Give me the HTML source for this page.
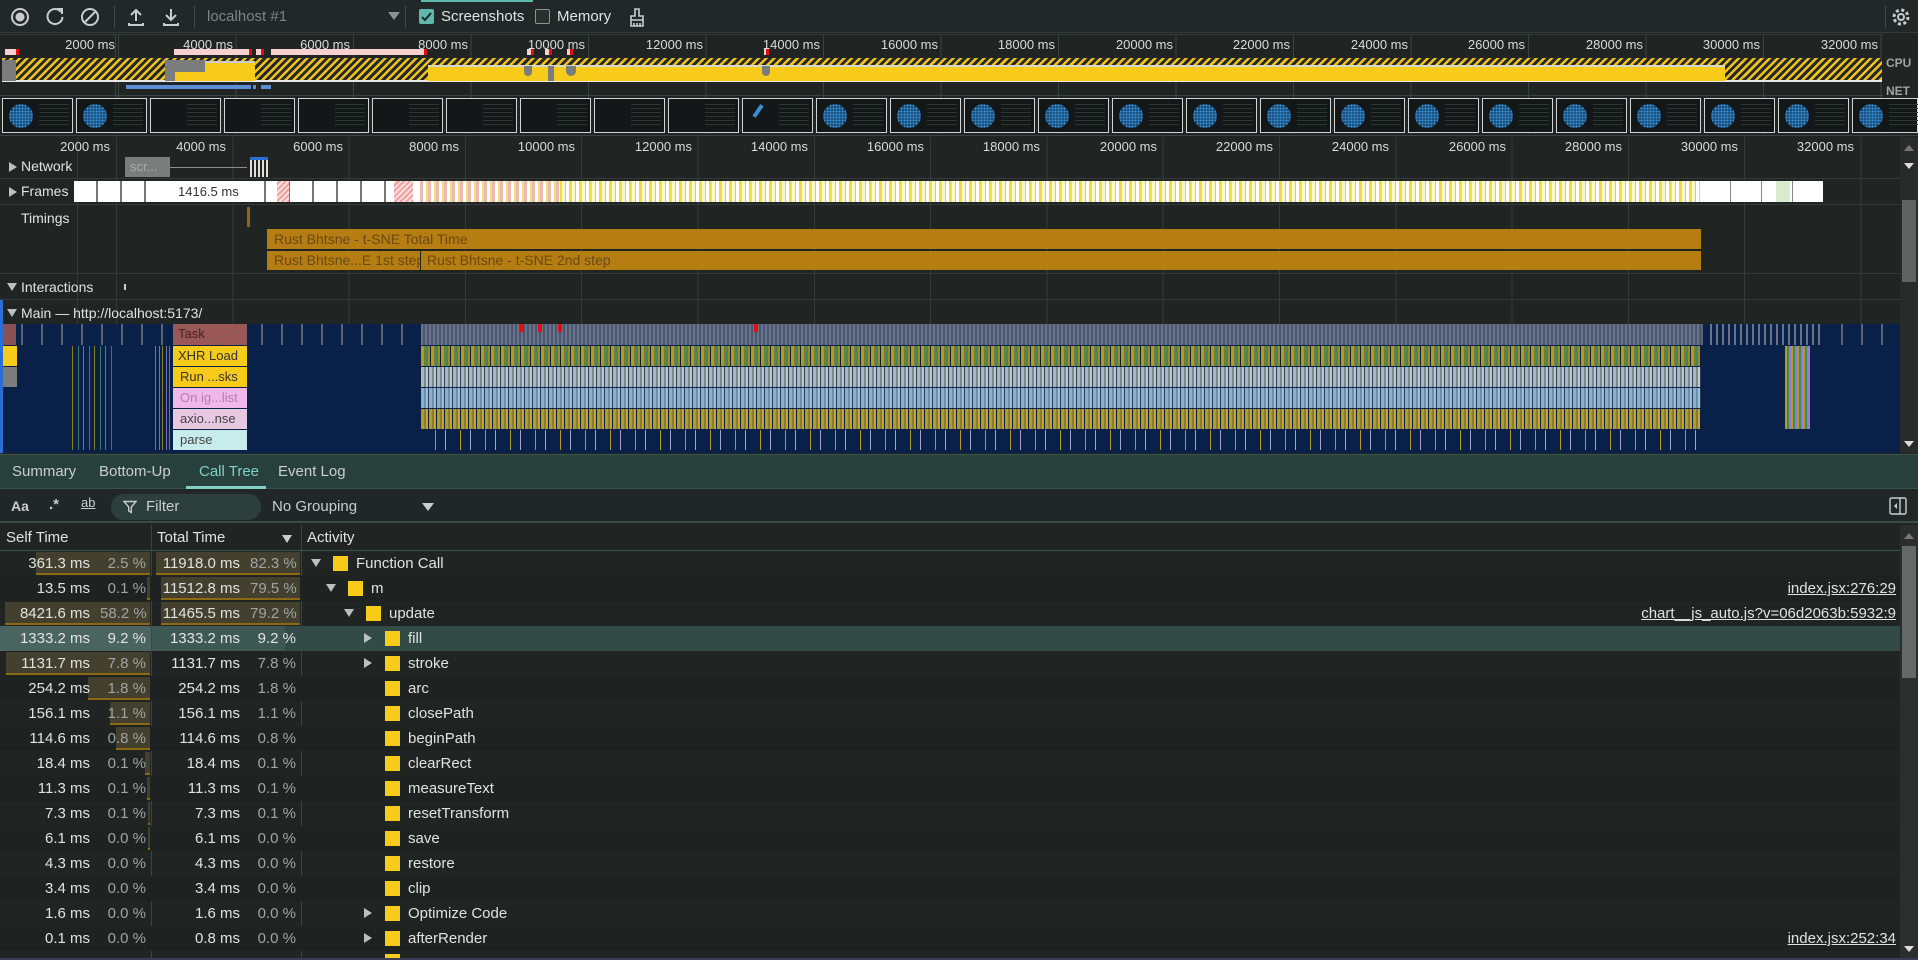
<!DOCTYPE html>
<html><head><meta charset="utf-8"><style>
*{margin:0;padding:0;box-sizing:border-box}
body{width:1918px;height:960px;overflow:hidden;background:#202524;font-family:"Liberation Sans",sans-serif;color:#e1e3e1;position:relative}
.a{position:absolute}
.lbl{position:absolute;font-size:13px;color:#d8dcdb;white-space:nowrap;text-align:right;width:80px}
.ico{position:absolute;top:6px;width:22px;height:22px}
.thumb{position:absolute;top:98px;width:71px;height:35px;border:1px solid #cfd3d2;background:#141717}
.thumb::after{content:"";position:absolute;left:36px;top:5px;width:30px;height:24px;background:repeating-linear-gradient(180deg,#2e3a30 0 1px,transparent 1px 4px);opacity:.9}
.blob{position:absolute;left:6px;top:5px;width:24px;height:24px;border-radius:50%;background:radial-gradient(circle,#3a95d8 0 1px,transparent 1.3px) 0 0/3px 3px,radial-gradient(circle,#1a4e80 0,#123a60 70%,transparent 72%)}
.row{position:absolute;left:0;width:1900px;height:25px;font-size:15px}
.c{position:absolute;top:4px;white-space:nowrap}
.ms{text-align:right;width:90px}
.pc{text-align:right;color:#9ea5a3}
.sq{position:absolute;top:5px;width:15px;height:15px;background:#f8cb1a}
.tri{position:absolute;top:8px;width:0;height:0;border-left:5px solid transparent;border-right:5px solid transparent;border-top:8px solid #b9c0be}
.trr{position:absolute;top:7px;width:0;height:0;border-top:5px solid transparent;border-bottom:5px solid transparent;border-left:8px solid #b9c0be}
.bar{position:absolute;top:1px;height:23px;background:#43402f;border-bottom:2px solid #8c6a12}
.lk{position:absolute;top:4px;right:4px;text-decoration:underline;color:#dfe4e3;font-size:15px}
.tab{position:absolute;top:463px;font-size:15px;color:#c9cecd}
</style></head><body>
<!-- toolbar -->
<div class="a" style="left:0;top:0;width:1918px;height:33px;background:#222827;border-bottom:1px solid #333b3a"></div>
<div class="a" style="left:421px;top:0;width:112px;height:2px;background:#5fb8ad"></div>
<svg class="ico" style="left:9px" viewBox="0 0 22 22"><circle cx="11" cy="11" r="8" fill="none" stroke="#c8cdcc" stroke-width="2"/><circle cx="11" cy="11" r="4.5" fill="#c8cdcc"/></svg>
<svg class="ico" style="left:44px" viewBox="0 0 22 22"><path d="M17 6 A7.5 7.5 0 1 0 18.5 11" fill="none" stroke="#c8cdcc" stroke-width="2"/><path d="M13 3 L18 3 L18 8" fill="none" stroke="#c8cdcc" stroke-width="2"/></svg>
<svg class="ico" style="left:79px" viewBox="0 0 22 22"><circle cx="11" cy="11" r="8" fill="none" stroke="#c8cdcc" stroke-width="2"/><path d="M6 16 L16 6" stroke="#c8cdcc" stroke-width="2"/></svg>
<div class="a" style="left:114px;top:6px;width:1px;height:22px;background:#444c4a"></div>
<svg class="ico" style="left:125px" viewBox="0 0 22 22"><path d="M11 15 V4 M6 9 L11 4 L16 9 M4 17 V19 H18 V17" fill="none" stroke="#c8cdcc" stroke-width="2"/></svg>
<svg class="ico" style="left:160px" viewBox="0 0 22 22"><path d="M11 3 V14 M6 9 L11 14 L16 9 M4 17 V19 H18 V17" fill="none" stroke="#c8cdcc" stroke-width="2"/></svg>
<div class="a" style="left:194px;top:6px;width:1px;height:22px;background:#444c4a"></div>
<div class="a" style="left:207px;top:8px;font-size:15px;color:#7d8583">localhost #1</div>
<div class="a" style="left:388px;top:12px;border-left:6px solid transparent;border-right:6px solid transparent;border-top:8px solid #8a9290"></div>
<div class="a" style="left:405px;top:6px;width:1px;height:22px;background:#444c4a"></div>
<div class="a" style="left:419px;top:9px;width:15px;height:15px;background:#5fb8ad;border-radius:2px"></div>
<svg class="a" style="left:420px;top:10px" width="13" height="13" viewBox="0 0 13 13"><path d="M2 7 L5 10 L11 3" fill="none" stroke="#1d2a28" stroke-width="2"/></svg>
<div class="a" style="left:441px;top:8px;font-size:15px;color:#dfe3e2">Screenshots</div>
<div class="a" style="left:535px;top:9px;width:15px;height:15px;border:1.5px solid #8d9593;border-radius:2px;background:#2a2f2e"></div>
<div class="a" style="left:557px;top:8px;font-size:15px;color:#dfe3e2">Memory</div>
<svg class="ico" style="left:626px" viewBox="0 0 22 22"><path d="M9 3 H13 V10 H17 V14 H5 V10 H9 Z M5 14 V20 H17 V14 M8 17 V20 M11 17 V20 M14 17 V20" fill="none" stroke="#c8cdcc" stroke-width="1.6"/></svg>
<div class="a" style="left:1885px;top:6px;width:1px;height:22px;background:#444c4a"></div>
<svg class="ico" style="left:1890px" viewBox="0 0 22 22"><circle cx="11" cy="11" r="3" fill="none" stroke="#c8cdcc" stroke-width="2"/><circle cx="11" cy="11" r="7" fill="none" stroke="#c8cdcc" stroke-width="3" stroke-dasharray="3 2.5"/></svg>

<!-- overview -->
<div class="a" style="left:0;top:34px;width:1883px;height:100px;background:repeating-linear-gradient(90deg,#3a4442 0 1px,transparent 1px 117.5px);background-position:118px 0"></div>
<div class="a" style="left:0;top:34px;width:1883px;height:1px;background:#333b3a"></div>
<div class="lbl" style="left:35px;top:37px">2000 ms</div><div class="lbl" style="left:153px;top:37px">4000 ms</div><div class="lbl" style="left:270px;top:37px">6000 ms</div><div class="lbl" style="left:388px;top:37px">8000 ms</div><div class="lbl" style="left:505px;top:37px">10000 ms</div><div class="lbl" style="left:623px;top:37px">12000 ms</div><div class="lbl" style="left:740px;top:37px">14000 ms</div><div class="lbl" style="left:858px;top:37px">16000 ms</div><div class="lbl" style="left:975px;top:37px">18000 ms</div><div class="lbl" style="left:1093px;top:37px">20000 ms</div><div class="lbl" style="left:1210px;top:37px">22000 ms</div><div class="lbl" style="left:1328px;top:37px">24000 ms</div><div class="lbl" style="left:1445px;top:37px">26000 ms</div><div class="lbl" style="left:1563px;top:37px">28000 ms</div><div class="lbl" style="left:1680px;top:37px">30000 ms</div><div class="lbl" style="left:1798px;top:37px">32000 ms</div>
<!-- red bars -->
<div class="a" style="left:5px;top:49px;width:14px;height:6px;background:#f8d0d0;border-right:3px solid #e01010"></div>
<div class="a" style="left:174px;top:49px;width:78px;height:6px;background:#f8d0d0;border-right:3px solid #e01010"></div>
<div class="a" style="left:256px;top:49px;width:8px;height:6px;background:#f8d0d0;border-right:3px solid #e01010"></div>
<div class="a" style="left:271px;top:49px;width:156px;height:6px;background:#f8d0d0;border-right:3px solid #e01010"></div>
<div class="a" style="left:527px;top:49px;width:7px;height:6px;background:#f8d0d0;border-right:3px solid #e01010"></div>
<div class="a" style="left:545px;top:49px;width:7px;height:6px;background:#f8d0d0;border-right:3px solid #e01010"></div>
<div class="a" style="left:567px;top:49px;width:6px;height:6px;background:#f8d0d0;border-right:3px solid #e01010"></div>
<div class="a" style="left:764px;top:49px;width:5px;height:6px;background:#f8d0d0;border-right:3px solid #e01010"></div>
<!-- CPU -->
<div class="a" style="left:2px;top:58px;width:1880px;height:24px;background:repeating-linear-gradient(-45deg,#f0c31a 0 2.5px,#262a22 2.5px 5.5px);border-bottom:2px solid #e8e8e8"></div>
<div class="a" style="left:2px;top:60px;width:14px;height:21px;background:#7a7d7c"></div>
<div class="a" style="left:165px;top:60px;width:40px;height:21px;background:#7a7d7c"></div>
<div class="a" style="left:175px;top:72px;width:30px;height:9px;background:#f8cb1a"></div>
<div class="a" style="left:205px;top:61px;width:50px;height:20px;background:#f8cb1a;border-top:2px solid #ccc"></div>
<div class="a" style="left:428px;top:65px;width:1297px;height:16px;background:#f8cb1a;border-top:2px solid #d8d8c8"></div>
<div class="a" style="left:524px;top:66px;width:8px;height:10px;background:#7a7d7c;border-radius:0 0 4px 4px"></div>
<div class="a" style="left:548px;top:66px;width:6px;height:15px;background:#7a7d7c"></div>
<div class="a" style="left:566px;top:66px;width:10px;height:10px;background:#7a7d7c;border-radius:0 0 5px 5px"></div>
<div class="a" style="left:762px;top:66px;width:8px;height:10px;background:#7a7d7c;border-radius:0 0 4px 4px"></div>
<div class="a" style="left:1886px;top:56px;font-size:12px;font-weight:bold;color:#9ea5a3">CPU</div>
<div class="a" style="left:1886px;top:84px;font-size:12px;font-weight:bold;color:#9ea5a3">NET</div>
<div class="a" style="left:126px;top:85px;width:125px;height:4px;background:#5b8ed6"></div>
<div class="a" style="left:253px;top:85px;width:3px;height:4px;background:#5b8ed6"></div>
<div class="a" style="left:261px;top:85px;width:10px;height:4px;background:#5b8ed6"></div>
<div class="a" style="left:0;top:95px;width:1883px;height:1px;background:#3a4442"></div>
<!-- thumbnails -->
<div class="thumb" style="left:2px"><div class="blob"></div></div>
<div class="thumb" style="left:76px"><div class="blob"></div></div>
<div class="thumb" style="left:150px"></div><div class="thumb" style="left:224px"></div><div class="thumb" style="left:298px"></div><div class="thumb" style="left:372px"></div><div class="thumb" style="left:446px"></div><div class="thumb" style="left:520px"></div><div class="thumb" style="left:594px"></div><div class="thumb" style="left:668px"></div>
<div class="thumb" style="left:742px"><div class="a" style="left:8px;top:10px;width:14px;height:4px;background:#3a8fd4;transform:rotate(-55deg)"></div></div>
<div class="thumb" style="left:816px"><div class="blob"></div></div>
<div class="thumb" style="left:890px"><div class="blob"></div></div>
<div class="thumb" style="left:964px"><div class="blob"></div></div>
<div class="thumb" style="left:1038px"><div class="blob"></div></div>
<div class="thumb" style="left:1112px"><div class="blob"></div></div>
<div class="thumb" style="left:1186px"><div class="blob"></div></div>
<div class="thumb" style="left:1260px"><div class="blob"></div></div>
<div class="thumb" style="left:1334px"><div class="blob"></div></div>
<div class="thumb" style="left:1408px"><div class="blob"></div></div>
<div class="thumb" style="left:1482px"><div class="blob"></div></div>
<div class="thumb" style="left:1556px"><div class="blob"></div></div>
<div class="thumb" style="left:1630px"><div class="blob"></div></div>
<div class="thumb" style="left:1704px"><div class="blob"></div></div>
<div class="thumb" style="left:1778px"><div class="blob"></div></div>
<div class="thumb" style="left:1852px;width:66px"><div class="blob"></div></div>
<div class="a" style="left:0;top:135px;width:1918px;height:1px;background:#3a4442"></div>

<!-- main timeline -->
<div class="a" style="left:0;top:137px;width:1900px;height:316px;background:repeating-linear-gradient(90deg,#333c3a 0 1px,transparent 1px 116.3px);background-position:116px 0"></div>
<div class="lbl" style="left:30px;top:139px">2000 ms</div><div class="lbl" style="left:146px;top:139px">4000 ms</div><div class="lbl" style="left:263px;top:139px">6000 ms</div><div class="lbl" style="left:379px;top:139px">8000 ms</div><div class="lbl" style="left:495px;top:139px">10000 ms</div><div class="lbl" style="left:612px;top:139px">12000 ms</div><div class="lbl" style="left:728px;top:139px">14000 ms</div><div class="lbl" style="left:844px;top:139px">16000 ms</div><div class="lbl" style="left:960px;top:139px">18000 ms</div><div class="lbl" style="left:1077px;top:139px">20000 ms</div><div class="lbl" style="left:1193px;top:139px">22000 ms</div><div class="lbl" style="left:1309px;top:139px">24000 ms</div><div class="lbl" style="left:1426px;top:139px">26000 ms</div><div class="lbl" style="left:1542px;top:139px">28000 ms</div><div class="lbl" style="left:1658px;top:139px">30000 ms</div><div class="lbl" style="left:1774px;top:139px">32000 ms</div>
<div class="trr" style="left:9px;top:162px"></div><div class="a" style="left:21px;top:158px;font-size:14px">Network</div>
<div class="a" style="left:125px;top:157px;width:45px;height:20px;background:#7a7d7c;font-size:13px;color:#aaa;padding:2px 0 0 5px">scr...</div>
<div class="a" style="left:170px;top:167px;width:77px;height:1px;background:#8a8d8c"></div>
<div class="a" style="left:250px;top:157px;width:18px;height:20px;background:repeating-linear-gradient(90deg,#e0e0d8 0 2px,#222 2px 4px)"></div>
<div class="a" style="left:250px;top:157px;width:18px;height:3px;background:#2a6fd6"></div>
<div class="a" style="left:0;top:178px;width:1900px;height:1px;background:#333b3a"></div>
<div class="trr" style="left:9px;top:187px"></div><div class="a" style="left:21px;top:183px;font-size:14px">Frames</div>
<div class="a" style="left:74px;top:181px;width:346px;height:21px;background:repeating-linear-gradient(90deg,#fff 0 22px,#777 22px 24px)"></div>
<div class="a" style="left:166px;top:181px;width:83px;height:21px;background:#fff;color:#333;font-size:13px;padding:3px 0 0 12px">1416.5 ms</div>
<div class="a" style="left:277px;top:181px;width:12px;height:21px;background:repeating-linear-gradient(-45deg,#f2a0a0 0 2px,#fbe0e0 2px 4px)"></div>
<div class="a" style="left:394px;top:181px;width:19px;height:21px;background:repeating-linear-gradient(-45deg,#f2a0a0 0 2px,#fbe0e0 2px 4px)"></div>
<div class="a" style="left:420px;top:181px;width:140px;height:21px;background:repeating-linear-gradient(90deg,#f2b8b8 0 3px,#fff 3px 6px,#eee070 6px 8px)"></div>
<div class="a" style="left:560px;top:181px;width:1140px;height:21px;background:repeating-linear-gradient(90deg,#f0e040 0 2px,#fbf8d0 2px 5px,#e8d020 5px 6px,#fff 6px 9px,#d8d880 9px 10px)"></div>
<div class="a" style="left:1700px;top:181px;width:123px;height:21px;background:repeating-linear-gradient(90deg,#fff 0 30px,#888 30px 31px)"></div>
<div class="a" style="left:1776px;top:181px;width:14px;height:21px;background:#d8ecd0"></div>
<div class="a" style="left:0;top:204px;width:1900px;height:1px;background:#333b3a"></div>
<div class="a" style="left:21px;top:210px;font-size:14px">Timings</div>
<div class="a" style="left:247px;top:207px;width:3px;height:20px;background:#8a6a12"></div>
<div class="a" style="left:267px;top:229px;width:1434px;height:20px;background:#b57d12;color:#6b4a0d;font-size:14px;padding:2px 0 0 7px;white-space:nowrap">Rust Bhtsne - t-SNE Total Time</div>
<div class="a" style="left:267px;top:251px;width:153px;height:19px;background:#b57d12;color:#6b4a0d;font-size:14px;padding:1px 0 0 7px;white-space:nowrap;overflow:hidden">Rust Bhtsne...E 1st step</div>
<div class="a" style="left:421px;top:251px;width:1280px;height:19px;background:#b57d12;color:#6b4a0d;font-size:14px;padding:1px 0 0 6px;white-space:nowrap">Rust Bhtsne - t-SNE 2nd step</div>
<div class="a" style="left:0;top:273px;width:1900px;height:1px;background:#333b3a"></div>
<div class="tri" style="left:7px;top:283px"></div><div class="a" style="left:21px;top:279px;font-size:14px">Interactions</div>
<div class="a" style="left:124px;top:284px;width:2px;height:6px;background:#ccc"></div>
<div class="a" style="left:0;top:299px;width:1900px;height:1px;background:#333b3a"></div>
<div class="a" style="left:0;top:300px;width:3px;height:153px;background:#2a6fd6"></div>
<div class="tri" style="left:7px;top:309px"></div><div class="a" style="left:21px;top:305px;font-size:14px">Main — http://localhost:5173/</div>

<!-- flame chart -->
<div class="a" style="left:3px;top:324px;width:1897px;height:129px;background:#092149"></div>
<div class="a" style="left:3px;top:324px;width:1897px;height:21px;background:repeating-linear-gradient(90deg,transparent 0 18px,#5a6270 18px 20px)"></div>
<div class="a" style="left:3px;top:324px;width:13px;height:21px;background:repeating-linear-gradient(-45deg,#9a4a4a 0 2px,#7a5a5a 2px 4px)"></div>
<div class="a" style="left:173px;top:324px;width:74px;height:21px;background:repeating-linear-gradient(-45deg,#a85050 0 2px,#8a6060 2px 4px);font-size:13px;color:#4a2020;padding:2px 0 0 5px">Task</div>
<div class="a" style="left:3px;top:346px;width:14px;height:20px;background:#f8cb1a"></div>
<div class="a" style="left:3px;top:367px;width:14px;height:20px;background:#7a7d7c"></div>
<div class="a" style="left:72px;top:346px;width:40px;height:104px;background:repeating-linear-gradient(90deg,#8a7a20 0 1px,#092149 1px 6px,#3a7a60 6px 7px,#092149 7px 11px)"></div>
<div class="a" style="left:155px;top:346px;width:18px;height:104px;background:repeating-linear-gradient(90deg,#8a7a20 0 1px,#092149 1px 4px,#7a6ab0 4px 5px,#092149 5px 7px)"></div>
<div class="a" style="left:173px;top:346px;width:74px;height:20px;background:#f8cb1a;color:#333;font-size:13px;padding:2px 0 0 5px">XHR Load</div>
<div class="a" style="left:173px;top:367px;width:74px;height:20px;background:#f8cb1a;color:#333;font-size:13px;padding:2px 0 0 7px">Run ...sks</div>
<div class="a" style="left:173px;top:388px;width:74px;height:20px;background:#f0b8e8;color:#b080b0;font-size:13px;padding:2px 0 0 7px">On ig...list</div>
<div class="a" style="left:173px;top:409px;width:74px;height:20px;background:#e8c8e0;color:#444;font-size:13px;padding:2px 0 0 7px">axio...nse</div>
<div class="a" style="left:173px;top:430px;width:74px;height:20px;background:#c8ecec;color:#444;font-size:13px;padding:2px 0 0 7px">parse</div>
<!-- dense -->
<div class="a" style="left:421px;top:324px;width:1280px;height:21px;background:repeating-linear-gradient(90deg,#6a7488 0 2px,#4c5670 2px 4px)"></div>
<div class="a" style="left:421px;top:346px;width:1280px;height:20px;background:repeating-linear-gradient(90deg,#b49a20 0 3px,#7a7a30 3px 5px,#3a8a6a 5px 7px,#a08a20 7px 9px,#092149 9px 10px)"></div>
<div class="a" style="left:421px;top:367px;width:1280px;height:20px;background:repeating-linear-gradient(90deg,#a8b8b8 0 3px,#7a8a8a 3px 5px,#c0cccc 5px 7px,#2a3a5a 7px 8px)"></div>
<div class="a" style="left:421px;top:388px;width:1280px;height:20px;background:repeating-linear-gradient(90deg,#8ab0d0 0 3px,#6a90b0 3px 5px,#a0c0d8 5px 7px,#2a3a5a 7px 8px)"></div>
<div class="a" style="left:421px;top:409px;width:1280px;height:20px;background:repeating-linear-gradient(90deg,#b49a20 0 3px,#8a7a3a 3px 5px,#c0a830 5px 7px,#092149 7px 8px)"></div>
<div class="a" style="left:421px;top:430px;width:1280px;height:20px;background:repeating-linear-gradient(90deg,#092149 0 14px,#b49a20 14px 15px,#092149 15px 24px,#a8a0d0 24px 25px)"></div>
<div class="a" style="left:1710px;top:324px;width:113px;height:21px;background:repeating-linear-gradient(90deg,#6a7488 0 2px,#092149 2px 6px)"></div>
<div class="a" style="left:1785px;top:346px;width:25px;height:83px;background:repeating-linear-gradient(90deg,#b49a20 0 2px,#3a8a6a 2px 4px,#9a7ad0 4px 6px)"></div>
<div class="a" style="left:519px;top:324px;width:5px;height:8px;background:#e01010"></div>
<div class="a" style="left:538px;top:324px;width:4px;height:8px;background:#e01010"></div>
<div class="a" style="left:558px;top:324px;width:4px;height:8px;background:#e01010"></div>
<div class="a" style="left:754px;top:324px;width:4px;height:8px;background:#e01010"></div>
<!-- timeline scrollbar -->
<div class="a" style="left:1900px;top:137px;width:18px;height:316px;background:#272c2b"></div>
<div class="a" style="left:1904px;top:145px;border-left:5px solid transparent;border-right:5px solid transparent;border-bottom:6px solid #777"></div>
<div class="a" style="left:1904px;top:163px;border-left:5px solid transparent;border-right:5px solid transparent;border-top:6px solid #ddd"></div>
<div class="a" style="left:1902px;top:200px;width:14px;height:82px;background:#5f6362"></div>
<div class="a" style="left:1904px;top:441px;border-left:5px solid transparent;border-right:5px solid transparent;border-top:6px solid #ddd"></div>

<!-- tabs -->
<div class="a" style="left:0;top:454px;width:1918px;height:35px;background:#28403c;border-top:1px solid #3a5450;border-bottom:1px solid #3a5450"></div>
<div class="tab" style="left:12px">Summary</div>
<div class="tab" style="left:99px">Bottom-Up</div>
<div class="tab" style="left:199px;color:#7fd1c6">Call Tree</div>
<div class="a" style="left:186px;top:486px;width:80px;height:3px;background:#7fd1c6"></div>
<div class="tab" style="left:278px">Event Log</div>
<!-- filter bar -->
<div class="a" style="left:0;top:490px;width:1918px;height:33px;background:#212726;border-bottom:2px solid #3a4c49"></div>
<div class="a" style="left:11px;top:498px;font-size:14px;font-weight:bold;color:#c9cecd">Aa</div>
<div class="a" style="left:49px;top:496px;font-size:15px;font-weight:bold;color:#c9cecd">.*</div>
<div class="a" style="left:81px;top:495px;font-size:13px;color:#c9cecd;text-decoration:underline">ab</div>
<div class="a" style="left:111px;top:494px;width:150px;height:26px;border-radius:13px;background:#2c3f3c"></div>
<svg class="a" style="left:123px;top:500px" width="14" height="14" viewBox="0 0 14 14"><path d="M1 1.5 H13 L8.3 7 V12.5 L5.7 11 V7 Z" fill="none" stroke="#c9cecd" stroke-width="1.4"/></svg>
<div class="a" style="left:146px;top:498px;font-size:15px;color:#c9cecd">Filter</div>
<div class="a" style="left:272px;top:498px;font-size:15px;color:#c9cecd">No Grouping</div>
<div class="a" style="left:422px;top:503px;border-left:6px solid transparent;border-right:6px solid transparent;border-top:8px solid #c9cecd"></div>
<svg class="a" style="left:1889px;top:497px" width="18" height="18" viewBox="0 0 18 18"><rect x="1" y="1" width="16" height="16" rx="1.5" fill="none" stroke="#c9cecd" stroke-width="1.4"/><path d="M11 1 V17" stroke="#c9cecd" stroke-width="1.4"/><path d="M8 6 L5 9 L8 12 Z" fill="#c9cecd"/></svg>
<!-- header -->
<div class="a" style="left:0;top:525px;width:1900px;height:26px;border-bottom:1px solid #3a5450"></div>
<div class="a" style="left:6px;top:529px;font-size:15px">Self Time</div>
<div class="a" style="left:157px;top:529px;font-size:15px">Total Time</div>
<div class="a" style="left:282px;top:535px;border-left:5px solid transparent;border-right:5px solid transparent;border-top:8px solid #c9cecd"></div>
<div class="a" style="left:307px;top:529px;font-size:15px">Activity</div>
<div class="a" style="left:151px;top:525px;width:1px;height:435px;background:#3a4442"></div>
<div class="a" style="left:301px;top:525px;width:1px;height:435px;background:#3a4442"></div>

<!-- rows -->
<div class="row" style="top:551px">
<div class="bar" style="left:36px;width:114px"></div><div class="bar" style="left:156px;width:144px"></div>
<div class="c ms" style="left:0">361.3 ms</div><div class="c pc" style="left:100px;width:46px">2.5 %</div>
<div class="c ms" style="left:150px">11918.0 ms</div><div class="c pc" style="left:250px;width:46px">82.3 %</div>
<div class="tri" style="left:311px"></div><div class="sq" style="left:333px"></div><div class="c" style="left:356px">Function Call</div></div>
<div class="row" style="top:576px;background:#1e2322">
<div class="bar" style="left:147px;width:3px"></div><div class="bar" style="left:161px;width:139px"></div>
<div class="c ms" style="left:0">13.5 ms</div><div class="c pc" style="left:100px;width:46px">0.1 %</div>
<div class="c ms" style="left:150px">11512.8 ms</div><div class="c pc" style="left:250px;width:46px">79.5 %</div>
<div class="tri" style="left:326px"></div><div class="sq" style="left:348px"></div><div class="c" style="left:371px">m</div>
<div class="lk">index.jsx:276:29</div></div>
<div class="row" style="top:601px">
<div class="bar" style="left:5px;width:145px"></div><div class="bar" style="left:161px;width:139px"></div>
<div class="c ms" style="left:0">8421.6 ms</div><div class="c pc" style="left:100px;width:46px">58.2 %</div>
<div class="c ms" style="left:150px">11465.5 ms</div><div class="c pc" style="left:250px;width:46px">79.2 %</div>
<div class="tri" style="left:344px"></div><div class="sq" style="left:366px"></div><div class="c" style="left:389px">update</div>
<div class="lk">chart__js_auto.js?v=06d2063b:5932:9</div></div>
<div class="row" style="top:626px;background:#324b47">
<div class="a" style="left:0;top:0;width:151px;height:25px;background:#4a6460"></div><div class="a" style="left:152px;top:0;width:133px;height:25px;background:#3e5854"></div>
<div class="c ms" style="left:0">1333.2 ms</div><div class="c pc" style="left:100px;width:46px;color:#e1e3e1">9.2 %</div>
<div class="c ms" style="left:150px">1333.2 ms</div><div class="c pc" style="left:250px;width:46px;color:#e1e3e1">9.2 %</div>
<div class="trr" style="left:364px"></div><div class="sq" style="left:385px"></div><div class="c" style="left:408px">fill</div></div>
<div class="row" style="top:651px">
<div class="bar" style="left:6px;width:144px"></div>
<div class="c ms" style="left:0">1131.7 ms</div><div class="c pc" style="left:100px;width:46px">7.8 %</div>
<div class="c ms" style="left:150px">1131.7 ms</div><div class="c pc" style="left:250px;width:46px">7.8 %</div>
<div class="trr" style="left:364px"></div><div class="sq" style="left:385px"></div><div class="c" style="left:408px">stroke</div></div>
<div class="row" style="top:676px;background:#1e2322">
<div class="bar" style="left:88px;width:62px"></div>
<div class="c ms" style="left:0">254.2 ms</div><div class="c pc" style="left:100px;width:46px">1.8 %</div>
<div class="c ms" style="left:150px">254.2 ms</div><div class="c pc" style="left:250px;width:46px">1.8 %</div>
<div class="sq" style="left:385px"></div><div class="c" style="left:408px">arc</div></div>
<div class="row" style="top:701px">
<div class="bar" style="left:110px;width:40px"></div>
<div class="c ms" style="left:0">156.1 ms</div><div class="c pc" style="left:100px;width:46px">1.1 %</div>
<div class="c ms" style="left:150px">156.1 ms</div><div class="c pc" style="left:250px;width:46px">1.1 %</div>
<div class="sq" style="left:385px"></div><div class="c" style="left:408px">closePath</div></div>
<div class="row" style="top:726px;background:#1e2322">
<div class="bar" style="left:116px;width:34px"></div>
<div class="c ms" style="left:0">114.6 ms</div><div class="c pc" style="left:100px;width:46px">0.8 %</div>
<div class="c ms" style="left:150px">114.6 ms</div><div class="c pc" style="left:250px;width:46px">0.8 %</div>
<div class="sq" style="left:385px"></div><div class="c" style="left:408px">beginPath</div></div>
<div class="row" style="top:751px">
<div class="bar" style="left:145px;width:5px"></div>
<div class="c ms" style="left:0">18.4 ms</div><div class="c pc" style="left:100px;width:46px">0.1 %</div>
<div class="c ms" style="left:150px">18.4 ms</div><div class="c pc" style="left:250px;width:46px">0.1 %</div>
<div class="sq" style="left:385px"></div><div class="c" style="left:408px">clearRect</div></div>
<div class="row" style="top:776px;background:#1e2322">
<div class="bar" style="left:147px;width:3px"></div>
<div class="c ms" style="left:0">11.3 ms</div><div class="c pc" style="left:100px;width:46px">0.1 %</div>
<div class="c ms" style="left:150px">11.3 ms</div><div class="c pc" style="left:250px;width:46px">0.1 %</div>
<div class="sq" style="left:385px"></div><div class="c" style="left:408px">measureText</div></div>
<div class="row" style="top:801px">
<div class="bar" style="left:148px;width:2px"></div>
<div class="c ms" style="left:0">7.3 ms</div><div class="c pc" style="left:100px;width:46px">0.1 %</div>
<div class="c ms" style="left:150px">7.3 ms</div><div class="c pc" style="left:250px;width:46px">0.1 %</div>
<div class="sq" style="left:385px"></div><div class="c" style="left:408px">resetTransform</div></div>
<div class="row" style="top:826px;background:#1e2322">
<div class="bar" style="left:148px;width:2px"></div>
<div class="c ms" style="left:0">6.1 ms</div><div class="c pc" style="left:100px;width:46px">0.0 %</div>
<div class="c ms" style="left:150px">6.1 ms</div><div class="c pc" style="left:250px;width:46px">0.0 %</div>
<div class="sq" style="left:385px"></div><div class="c" style="left:408px">save</div></div>
<div class="row" style="top:851px">
<div class="c ms" style="left:0">4.3 ms</div><div class="c pc" style="left:100px;width:46px">0.0 %</div>
<div class="c ms" style="left:150px">4.3 ms</div><div class="c pc" style="left:250px;width:46px">0.0 %</div>
<div class="sq" style="left:385px"></div><div class="c" style="left:408px">restore</div></div>
<div class="row" style="top:876px;background:#1e2322">
<div class="c ms" style="left:0">3.4 ms</div><div class="c pc" style="left:100px;width:46px">0.0 %</div>
<div class="c ms" style="left:150px">3.4 ms</div><div class="c pc" style="left:250px;width:46px">0.0 %</div>
<div class="sq" style="left:385px"></div><div class="c" style="left:408px">clip</div></div>
<div class="row" style="top:901px">
<div class="c ms" style="left:0">1.6 ms</div><div class="c pc" style="left:100px;width:46px">0.0 %</div>
<div class="c ms" style="left:150px">1.6 ms</div><div class="c pc" style="left:250px;width:46px">0.0 %</div>
<div class="trr" style="left:364px"></div><div class="sq" style="left:385px"></div><div class="c" style="left:408px">Optimize Code</div></div>
<div class="row" style="top:926px;background:#1e2322">
<div class="c ms" style="left:0">0.1 ms</div><div class="c pc" style="left:100px;width:46px">0.0 %</div>
<div class="c ms" style="left:150px">0.8 ms</div><div class="c pc" style="left:250px;width:46px">0.0 %</div>
<div class="trr" style="left:364px"></div><div class="sq" style="left:385px"></div><div class="c" style="left:408px">afterRender</div>
<div class="lk">index.jsx:252:34</div></div>
<div class="a" style="left:385px;top:954px;width:15px;height:4px;background:#f8cb1a"></div>
<div class="a" style="left:0;top:958px;width:1918px;height:2px;background:#3a3a5a"></div>
<!-- call tree scrollbar -->
<div class="a" style="left:1900px;top:525px;width:18px;height:433px;background:#2a2f2e"></div>
<div class="a" style="left:1904px;top:533px;border-left:5px solid transparent;border-right:5px solid transparent;border-bottom:6px solid #777"></div>
<div class="a" style="left:1902px;top:546px;width:14px;height:132px;background:#646867"></div>
<div class="a" style="left:1904px;top:946px;border-left:5px solid transparent;border-right:5px solid transparent;border-top:6px solid #ddd"></div>
</body></html>
